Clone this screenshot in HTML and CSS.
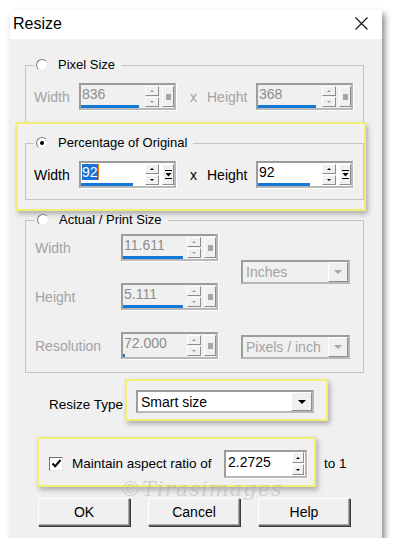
FILE: index.html
```html
<!DOCTYPE html>
<html lang="en">
<head>
  <meta charset="UTF-8">
  <title>Resize</title>
  <meta name="viewport" content="width=device-width, initial-scale=1.0">
  <link rel="stylesheet" href="styles.css">
</head>
<body>

  <div class="window">
    <div class="titlebar">
      <span class="title">Resize</span>
      <svg class="close" width="13" height="13" viewBox="0 0 13 13"><path d="M0.5 0.5L12.5 12.5M12.5 0.5L0.5 12.5" stroke="#111" stroke-width="1.1" fill="none"/></svg>
    </div>

    <div class="content">

      <!-- pixel size -->
      <fieldset class="group group-pixel">
        <legend><span class="radio"></span><span class="legend-text">Pixel Size</span></legend>
        <div class="row dim">
          <span class="lbl">Width</span>
          <div class="spin off">
            <span class="val">836<b class="bar" style="width:58px"></b></span>
            <span class="arrows"><i class="up"></i><i class="dn"></i></span>
            <span class="sq"><em class="dot"></em></span>
          </div>
          <span class="times">x</span>
          <span class="lbl lbl-h">Height</span>
          <div class="spin off">
            <span class="val">368<b class="bar" style="width:58px"></b></span>
            <span class="arrows"><i class="up"></i><i class="dn"></i></span>
            <span class="sq"><em class="dot"></em></span>
          </div>
        </div>
      </fieldset>

      <!-- percentage -->
      <div class="hl hl-pct">
        <fieldset class="group group-pct">
          <legend><span class="radio on"></span><span class="legend-text">Percentage of Original</span></legend>
          <div class="row">
            <span class="lbl">Width</span>
            <div class="spin">
              <span class="val"><span class="sel">92</span><b class="bar" style="width:52px"></b></span>
              <span class="arrows"><i class="up"></i><i class="dn"></i></span>
              <span class="sq"><svg width="7" height="9" viewBox="0 0 7 9"><path d="M0 0.5H7M0 8.5H7" stroke="#000"/><path d="M0.5 3H6.5L3.5 6.5Z" fill="#000"/></svg></span>
            </div>
            <span class="times">x</span>
            <span class="lbl lbl-h">Height</span>
            <div class="spin">
              <span class="val">92<b class="bar" style="width:52px"></b></span>
              <span class="arrows"><i class="up"></i><i class="dn"></i></span>
              <span class="sq"><svg width="7" height="9" viewBox="0 0 7 9"><path d="M0 0.5H7M0 8.5H7" stroke="#000"/><path d="M0.5 3H6.5L3.5 6.5Z" fill="#000"/></svg></span>
            </div>
          </div>
        </fieldset>
      </div>

      <!-- actual / print -->
      <fieldset class="group group-print">
        <legend><span class="radio"></span><span class="legend-text">Actual / Print Size</span></legend>
        <div class="print-grid dim">
          <span class="lbl">Width</span>
          <div class="spin off">
            <span class="val">11.611<b class="bar" style="width:60px"></b></span>
            <span class="arrows"><i class="up"></i><i class="dn"></i></span>
            <span class="sq"><em class="dot"></em></span>
          </div>
          <div class="drop off drop-units">
            <span class="drop-text">Inches</span>
            <span class="drop-btn"><i class="tri"></i></span>
          </div>

          <span class="lbl">Height</span>
          <div class="spin off">
            <span class="val">5.111<b class="bar" style="width:60px"></b></span>
            <span class="arrows"><i class="up"></i><i class="dn"></i></span>
            <span class="sq"><em class="dot"></em></span>
          </div>

          <span class="lbl">Resolution</span>
          <div class="spin off">
            <span class="val">72.000<b class="bar" style="width:2px"></b></span>
            <span class="arrows"><i class="up"></i><i class="dn"></i></span>
            <span class="sq"><em class="dot"></em></span>
          </div>
          <div class="drop off drop-res">
            <span class="drop-text">Pixels / inch</span>
            <span class="drop-btn"><i class="tri"></i></span>
          </div>
        </div>
      </fieldset>

      <!-- resize type -->
      <div class="type-row">
        <span class="type-lbl">Resize Type</span>
        <div class="hl hl-type">
          <div class="drop drop-type">
            <span class="drop-text">Smart size</span>
            <span class="drop-btn"><i class="tri"></i></span>
          </div>
        </div>
      </div>

      <!-- aspect ratio -->
      <div class="ratio-row">
        <div class="hl hl-ratio">
          <span class="check"><svg width="11" height="11" viewBox="0 0 11 11"><path d="M1.5 5.5L4.2 8.3L9.5 2" stroke="#000" stroke-width="2" fill="none"/></svg></span>
          <span class="ratio-lbl">Maintain aspect ratio of</span>
          <div class="spin spin-ratio">
            <span class="val">2.2725</span>
            <span class="arrows"><i class="up"></i><i class="dn"></i></span>
          </div>
        </div>
        <span class="to-one">to 1</span>
      </div>

      <div class="buttons">
        <button class="btn">OK</button>
        <button class="btn">Cancel</button>
        <button class="btn">Help</button>
      </div>

      <span class="watermark">©Tirasimages</span>
    </div>
  </div>

</body>
</html>
```

FILE: styles.css
```css
:root {
  --face: #f0f0f0;
  --dim: #a3a3a3;
  --frame: #9c9c9c;
  --line: #c4c4c4;
  --yellow: #f2ee74;
  --blue: #1479d6;
}

body {
  margin: 0;
  background: #fff;
  font-family: 'Liberation Sans', Arial, sans-serif;
  font-size: 13px;
  color: #000;
}

.window {
  margin: 10px 0 0 10px;
  width: 372px;
  height: 528px;
  background: var(--face);
  box-shadow: 3px 4px 6px rgba(0,0,0,0.45);
  display: flex;
  flex-direction: column;
}

.titlebar {
  height: 29px;
  background: #fff;
  display: flex;
  align-items: center;
  justify-content: space-between;
  padding: 0 14px 0 3px;
}

.title {
  font-size: 16px;
  margin-top: -2px;
}

.close {
  margin-top: -2px;
}

.content {
  position: relative;
  padding-left: 15px;
  flex: 1;
}

/* group boxes */
.group {
  margin: 0;
  padding: 0 0 0 8px;
  width: 339px;
  box-sizing: border-box;
  border: 1px solid var(--line);
  min-width: 0;
}

.group legend {
  padding: 0 6px 0 2px;
  display: flex;
  align-items: center;
  height: 16px;
  line-height: 16px;
}

.legend-text {
  margin-left: 10px;
}

.radio {
  width: 12px;
  height: 12px;
  box-sizing: border-box;
  border-radius: 50%;
  background: #fff;
  border: 1px solid;
  border-color: #7a7a7a #e6e6e6 #e6e6e6 #7a7a7a;
  position: relative;
}

.radio.on::after {
  content: "";
  position: absolute;
  left: 3px;
  top: 3px;
  width: 4px;
  height: 4px;
  border-radius: 50%;
  background: #000;
}

.group-pixel {
  margin-top: 18px;
  border-bottom: none;
  padding-bottom: 12px;
}

.row {
  display: flex;
  align-items: center;
  margin-top: 10px;
}

.lbl {
  width: 45px;
  font-size: 14px;
}

.lbl-h {
  width: 49px;
}

.times {
  margin: 0 10px 0 14px;
  font-size: 14px;
}

.dim .lbl,
.dim .times {
  color: var(--dim);
}

/* spinner inputs */
.spin {
  display: flex;
  align-items: center;
  width: 97px;
  height: 27px;
  box-sizing: border-box;
  border: 2px solid var(--frame);
  border-right-color: #b8b8b8;
  border-bottom-color: #b8b8b8;
  background: #fff;
  box-shadow: 1px 1px 0 #fff;
}

.spin.off {
  background: var(--face);
}

.val {
  position: relative;
  width: 60px;
  height: 100%;
  line-height: 18px;
  padding-left: 1px;
  box-sizing: border-box;
  font-size: 14px;
}

.spin.off .val {
  color: #8c8c8c;
}

.sel {
  background: #1a73d9;
  color: #fff;
  box-shadow: 1px 0 0 #e07b20;
}

.bar {
  position: absolute;
  left: 0;
  bottom: 0;
  height: 3px;
  background: var(--blue);
}

.arrows {
  display: flex;
  flex-direction: column;
  margin-left: 4px;
  width: 14px;
}

.arrows i {
  height: 10px;
  box-sizing: border-box;
  background: var(--face);
  border: 1px solid;
  border-color: #fff #8d8d8d #8d8d8d #fff;
  display: flex;
  align-items: center;
  justify-content: center;
}

.arrows i + i {
  margin-top: 1px;
}

.arrows i::after {
  content: "";
  border-left: 2px solid transparent;
  border-right: 2px solid transparent;
}

.up::after {
  border-bottom: 2px solid #000;
}

.dn::after {
  border-top: 2px solid #000;
}

.spin.off .up::after {
  border-bottom-color: #9a9a9a;
}

.spin.off .dn::after {
  border-top-color: #9a9a9a;
}

.sq {
  margin-left: 3px;
  width: 12px;
  height: 21px;
  box-sizing: border-box;
  background: var(--face);
  border: 1px solid;
  border-color: #fff #8d8d8d #8d8d8d #fff;
  display: flex;
  align-items: center;
  justify-content: center;
}

.dot {
  width: 5px;
  height: 6px;
  background: #a6a6a6;
}

/* percentage highlight */
.hl {
  border: 2px solid var(--yellow);
  box-shadow: 2px 3px 5px rgba(0,0,0,0.28);
  box-sizing: border-box;
}

.hl-pct {
  margin-left: -9px;
  width: 350px;
  height: 89px;
  padding: 11px 0 0 7px;
  position: relative;
}

.group-pct {
  padding-bottom: 11px;
}

/* actual / print */
.group-print {
  margin-top: 1px;
  padding: 0 0 13px 9px;
}

.print-grid {
  display: grid;
  grid-template-columns: 63px 97px 109px;
  grid-template-rows: 27px 27px 27px;
  column-gap: 23px;
  row-gap: 22px;
  align-items: center;
  margin-top: 6px;
}

.drop {
  display: flex;
  align-items: center;
  box-sizing: border-box;
  border: 2px solid var(--frame);
  border-right-color: #b8b8b8;
  border-bottom-color: #b8b8b8;
  background: #fff;
  height: 24px;
}

.drop.off {
  background: var(--face);
  color: var(--dim);
}

.drop-units {
  grid-column: 3;
  grid-row: 1 / 3;
  align-self: center;
}

.drop-res {
  grid-column: 3;
  grid-row: 3;
  align-self: end;
}

.drop-text {
  flex: 1;
  padding-left: 3px;
  font-size: 14px;
}

.drop-btn {
  width: 20px;
  height: 100%;
  box-sizing: border-box;
  background: var(--face);
  border: 1px solid;
  border-color: #fff #8d8d8d #8d8d8d #fff;
  display: flex;
  align-items: center;
  justify-content: center;
}

.tri {
  border-left: 4px solid transparent;
  border-right: 4px solid transparent;
  border-top: 4px solid #000;
}

.drop.off .tri {
  border-top-color: #a6a6a6;
}

/* resize type */
.type-row {
  display: flex;
  align-items: center;
  margin: 6px 0 0 24px;
}

.type-lbl {
  width: 76px;
  margin-top: 8px;
  font-size: 13.5px;
}

.hl-type {
  width: 203px;
  height: 42px;
  padding: 9px 0 0 9px;
}

.drop-type {
  width: 178px;
  height: 23px;
}

.drop-type .drop-btn {
  width: 21px;
}

/* aspect ratio */
.ratio-row {
  display: flex;
  align-items: center;
  margin: 16px 0 0 12px;
}

.hl-ratio {
  width: 279px;
  height: 50px;
  display: flex;
  align-items: center;
  padding: 3px 0 0 10px;
}

.check {
  width: 14px;
  height: 14px;
  box-sizing: border-box;
  background: #fff;
  border: 1px solid;
  border-color: #6f6f6f #e6e6e6 #e6e6e6 #6f6f6f;
  display: flex;
  align-items: center;
  justify-content: center;
}

.ratio-lbl {
  margin-left: 9px;
  width: 152px;
  font-size: 13.5px;
}

.spin-ratio {
  width: 83px;
  height: 28px;
}

.spin-ratio .val {
  width: 64px;
  font-size: 14px;
  padding-left: 2px;
  line-height: 20px;
}

.spin-ratio .arrows {
  margin-left: 2px;
  width: 12px;
}

.spin-ratio .arrows i {
  height: 11px;
}

.to-one {
  margin-left: 8px;
  margin-top: 2px;
  font-size: 13.5px;
}

/* buttons */
.buttons {
  display: flex;
  gap: 18px;
  margin: 11px 0 0 13px;
}

.btn {
  width: 92px;
  height: 28px;
  background: var(--face);
  font-family: inherit;
  font-size: 14px;
  color: #000;
  border: 1px solid;
  border-color: #fff #6b6b6b #6b6b6b #fff;
  box-shadow: 1px 1px 0 #3a3a3a, inset -1px -1px 0 #a8a8a8;
  padding: 0;
}

.watermark {
  position: absolute;
  left: 110px;
  top: 438px;
  font-family: 'DejaVu Serif', serif;
  font-style: italic;
  font-size: 21px;
  letter-spacing: 1px;
  color: rgba(170,170,170,0.45);
  pointer-events: none;
}
```
